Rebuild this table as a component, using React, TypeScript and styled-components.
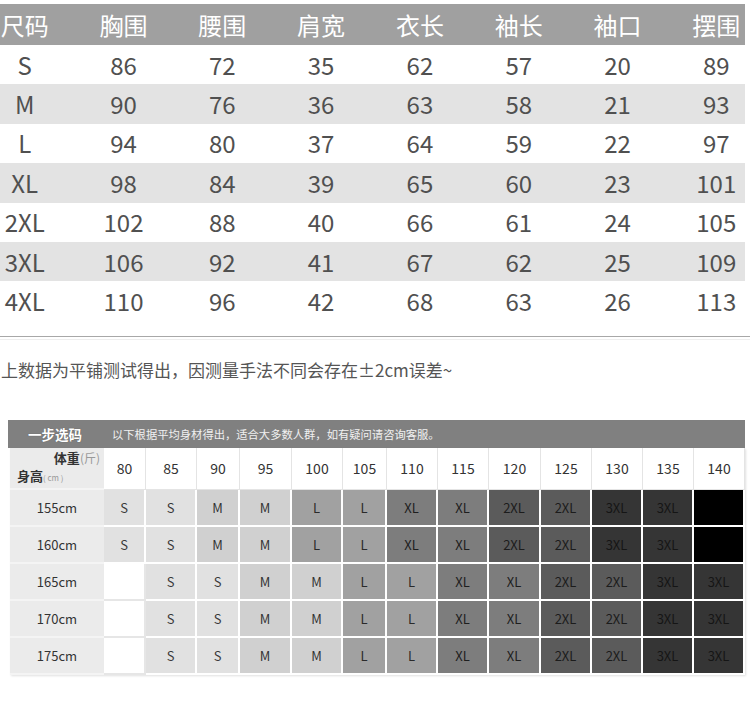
import React from 'react';
import styled, { createGlobalStyle } from 'styled-components';

const GlobalStyle = createGlobalStyle`
  body {
    margin: 0;
    background: #fff;
    font-family: "Noto Sans CJK SC", "Noto Sans", sans-serif;
  }
`;

const headers = ['尺码', '胸围', '腰围', '肩宽', '衣长', '袖长', '袖口', '摆围'];

const sizeRows = [
  ['S', '86', '72', '35', '62', '57', '20', '89'],
  ['M', '90', '76', '36', '63', '58', '21', '93'],
  ['L', '94', '80', '37', '64', '59', '22', '97'],
  ['XL', '98', '84', '39', '65', '60', '23', '101'],
  ['2XL', '102', '88', '40', '66', '61', '24', '105'],
  ['3XL', '106', '92', '41', '67', '62', '25', '109'],
  ['4XL', '110', '96', '42', '68', '63', '26', '113'],
];

const weights = ['80', '85', '90', '95', '100', '105', '110', '115', '120', '125', '130', '135', '140'];

const shortRow = ['S', 'S', 'M', 'M', 'L', 'L', 'XL', 'XL', '2XL', '2XL', '3XL', '3XL', 'BLACK'];
const tallRow = ['', 'S', 'S', 'M', 'M', 'L', 'L', 'XL', 'XL', '2XL', '2XL', '3XL', '3XL'];

const guideRows = [
  { height: '155cm', sizes: shortRow },
  { height: '160cm', sizes: shortRow },
  { height: '165cm', sizes: tallRow },
  { height: '170cm', sizes: tallRow },
  { height: '175cm', sizes: tallRow },
];

// cell shade for each size in the guide
const shades: Record<string, { bg: string; fg: string; line: string }> = {
  '': { bg: '#ffffff', fg: '#333', line: '#e6e6e6' },
  S: { bg: '#e1e1e1', fg: '#3a3a3a', line: '#ffffff' },
  M: { bg: '#d0d0d0', fg: '#333', line: '#ffffff' },
  L: { bg: '#a1a1a1', fg: '#2a2a2a', line: '#ffffff' },
  XL: { bg: '#7d7d7d', fg: '#1e1e1e', line: '#ffffff' },
  '2XL': { bg: '#5b5b5b', fg: '#1c1c1c', line: '#ffffff' },
  '3XL': { bg: '#353535', fg: '#151515', line: '#ffffff' },
  BLACK: { bg: '#000000', fg: '#000', line: '#ffffff' },
};

export default function App() {
  return (
    <Page>
      <GlobalStyle />

      {/* Measurement table, cropped on the left like the source image */}
      <SizeTable>
        <SizeRow $head>
          {headers.map((h) => (
            <SizeCell key={h}>{h}</SizeCell>
          ))}
        </SizeRow>
        {sizeRows.map((row, i) => (
          <SizeRow key={row[0]} $shade={i % 2 === 1}>
            {row.map((v, j) => (
              <SizeCell key={j}>{v}</SizeCell>
            ))}
          </SizeRow>
        ))}
      </SizeTable>

      <Divider />

      <Note>上数据为平铺测试得出，因测量手法不同会存在±2cm误差~</Note>

      {/* Height / weight guide */}
      <Guide>
        <GuideBar>
          <GuideTitle>一步选码</GuideTitle>
          <GuideDesc>以下根据平均身材得出，适合大多数人群，如有疑问请咨询客服。</GuideDesc>
        </GuideBar>

        <GuideGrid>
          <LabelCell $corner>
            <CornerTop>
              体重<Unit>(斤)</Unit>
            </CornerTop>
            <CornerBottom>
              身高<SmallUnit>( cm )</SmallUnit>
            </CornerBottom>
          </LabelCell>
          {weights.map((w) => (
            <WeightCell key={w}>{w}</WeightCell>
          ))}

          {guideRows.map((r) => (
            <React.Fragment key={r.height}>
              <LabelCell>{r.height}</LabelCell>
              {r.sizes.map((s, k) => (
                <SizeBox key={k} $bg={shades[s].bg} $fg={shades[s].fg} $line={shades[s].line}>
                  {s === 'BLACK' ? '' : s}
                </SizeBox>
              ))}
            </React.Fragment>
          ))}
        </GuideGrid>
      </Guide>
    </Page>
  );
}

const Page = styled.div`
  width: 750px;
  height: 717px;
  overflow: hidden;
  padding-top: 4px;
  box-sizing: border-box;
`;

const SizeTable = styled.div`
  width: 745px;
  overflow: hidden;
`;

const SizeRow = styled.div<{ $head?: boolean; $shade?: boolean }>`
  display: grid;
  grid-template-columns: repeat(8, 98.8px);
  width: 790px;
  margin-left: -24.7px;
  height: ${(p) => (p.$head ? '41px' : '39.4px')};
  align-items: center;
  background: ${(p) => (p.$head ? '#a0a0a0' : p.$shade ? '#e3e3e3' : '#ffffff')};
  color: ${(p) => (p.$head ? '#ffffff' : '#505050')};
  font-size: 24px;
  line-height: 1;
`;

const SizeCell = styled.div`
  text-align: center;
`;

const Divider = styled.div`
  margin-top: 15px;
  height: 2px;
  border-top: 1px solid #a8a8a8;
  border-bottom: 1px solid #eeeeee;
`;

const Note = styled.p`
  margin: 19px 0 0 1px;
  font-size: 17px;
  line-height: 22px;
  color: #555;
  white-space: nowrap;
`;

const Guide = styled.section`
  margin-top: 39px;
`;

const GuideBar = styled.div`
  margin-left: 8px;
  width: 737px;
  height: 28px;
  background: #808080;
  display: flex;
  align-items: center;
`;

const GuideTitle = styled.span`
  margin-left: 20px;
  font-size: 13.5px;
  font-weight: bold;
  color: #fff;
  text-shadow: 0 0 1px #555;
`;

const GuideDesc = styled.span`
  margin-left: 30px;
  font-size: 11.3px;
  color: #f0f0f0;
`;

const GuideGrid = styled.div`
  margin-left: 10px;
  width: 735px;
  display: grid;
  grid-template-columns: 94px 42px 51px 43px 52px 51px 44px 51px 51px 52px 51px 51px 51px 51px;
  grid-template-rows: 42px repeat(5, 37px);
  box-shadow: 1px 1px 2px rgba(0, 0, 0, 0.12);
`;

const LabelCell = styled.div<{ $corner?: boolean }>`
  background: #ebebeb;
  color: #333;
  font-size: 13px;
  box-sizing: border-box;
  border-bottom: 2px solid #f4f4f4;
  display: flex;
  flex-direction: ${(p) => (p.$corner ? 'column' : 'row')};
  align-items: center;
  justify-content: center;
  padding: ${(p) => (p.$corner ? '3px 4px 2px 7px' : '0')};
`;

const CornerTop = styled.div`
  align-self: flex-end;
  font-size: 13px;
  font-weight: bold;
  line-height: 18px;
`;

const CornerBottom = styled.div`
  align-self: flex-start;
  font-size: 13px;
  font-weight: bold;
  line-height: 18px;
`;

const Unit = styled.span`
  font-weight: normal;
  color: #999;
  font-size: 12px;
`;

const SmallUnit = styled.span`
  font-weight: normal;
  color: #999;
  font-size: 8px;
`;

const WeightCell = styled.div`
  background: #fff;
  color: #333;
  font-size: 14px;
  box-sizing: border-box;
  border-right: 1px solid #e4e4e4;
  border-bottom: 1px solid #e4e4e4;
  display: flex;
  align-items: center;
  justify-content: center;
`;

const SizeBox = styled.div<{ $bg: string; $fg: string; $line: string }>`
  background: ${(p) => p.$bg};
  color: ${(p) => p.$fg};
  font-size: 13px;
  box-sizing: border-box;
  border-right: 2px solid ${(p) => p.$line};
  border-bottom: 2px solid ${(p) => p.$line};
  display: flex;
  align-items: center;
  justify-content: center;
`;
